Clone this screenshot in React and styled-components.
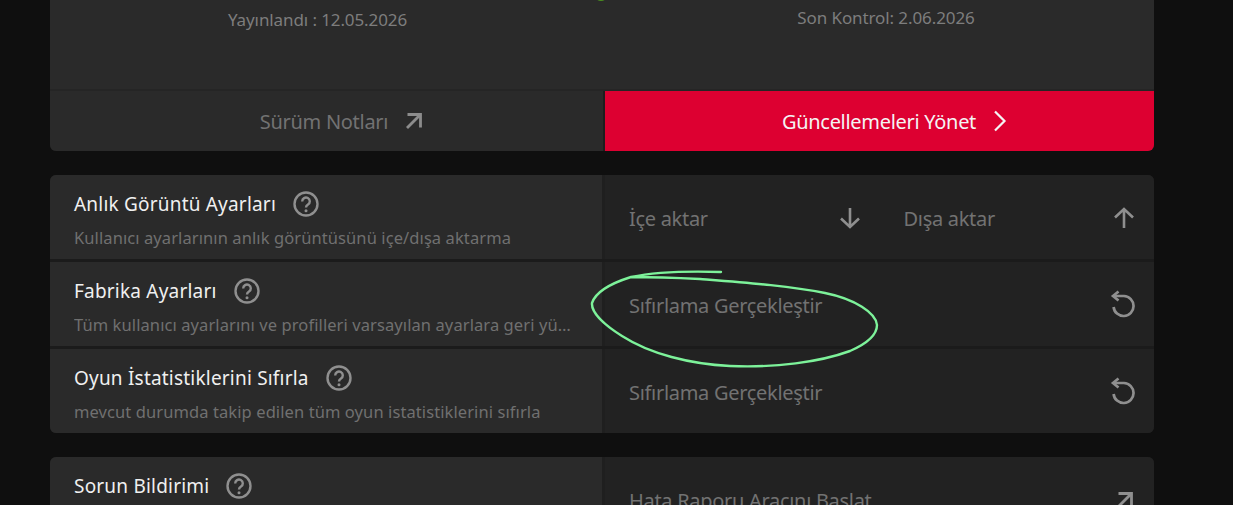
import React from 'react';
import styled, { createGlobalStyle } from 'styled-components';

const GlobalStyle = createGlobalStyle`
  html, body {
    margin: 0;
    height: 100%;
    overflow: hidden;
    background: #0e0e0e;
  }
`;

const Page = styled.div`
  position: relative;
  height: 505px;
  overflow: hidden;
  padding: 0 79px 0 50px;
  background: #0f0f0f;
  font-family: 'Noto Sans', 'Open Sans', sans-serif;
`;

const Scroller = styled.div`
  display: flex;
  flex-direction: column;
  gap: 24px;
  margin-top: -60px;
`;

const Panel = styled.section`
  border-radius: 6px;
  overflow: hidden;
  background: #1b1b1b;
`;

const Summary = styled.div`
  position: relative;
  display: grid;
  grid-template-columns: 535px 536px;
  column-gap: 33px;
  height: 151px;
  padding-top: 70px;
  box-sizing: border-box;
  background: #2a2a2a;
  border-bottom: 2px solid #252525;
`;

const StatusDot = styled.span`
  position: absolute;
  left: 544px;
  top: 47px;
  width: 14px;
  height: 14px;
  border-radius: 50%;
  background: #4a8f1e;
`;

const Stamp = styled.div`
  margin-top: ${({ $raised }) => ($raised ? -2 : 0)}px;
  font-size: 17px;
  line-height: 20px;
  color: #7d7d7d;
  text-align: center;
  letter-spacing: -0.1px;
`;

const ActionBar = styled.div`
  display: grid;
  grid-template-columns: 553px 1fr;
  height: 60px;
  gap: 2px;
  background: #1d1d1d;
`;

const ActionButton = styled.div`
  display: flex;
  align-items: center;
  justify-content: center;
  gap: 17px;
  padding-left: 30px;
  font-size: 20px;
  letter-spacing: -0.3px;
  color: ${({ $primary }) => ($primary ? '#f4f4f4' : '#727272')};
  background: ${({ $primary }) => ($primary ? '#dd0031' : '#2a2a2a')};

  svg {
    color: ${({ $primary }) => ($primary ? '#f4f4f4' : '#8c8c8c')};
  }
`;

const Rows = styled.div`
  display: flex;
  flex-direction: column;
  gap: 3px;
`;

const Row = styled.div`
  display: grid;
  grid-template-columns: 552px 1fr;
  gap: 3px;
  height: 84px;
  background: #1f1f1f;
`;

const Info = styled.div`
  box-sizing: border-box;
  padding: 15px 28px 0 24px;
  background: #2a2a2a;
  min-width: 0;
`;

const TitleLine = styled.div`
  display: flex;
  align-items: center;
  gap: 17px;
  height: 28px;
  font-size: 19px;
  letter-spacing: 0.2px;
  color: #f0f0f0;
`;

const HelpIcon = styled.svg`
  width: 26px;
  height: 26px;
  flex: none;
`;

const Description = styled.div`
  margin-top: 8px;
  font-size: 16.5px;
  line-height: 24px;
  letter-spacing: 0.09px;
  color: #707070;
  white-space: nowrap;
  overflow: hidden;
  text-overflow: ellipsis;
`;

const Controls = styled.div`
  display: flex;
  background: #222222;
`;

const Control = styled.div`
  flex: 1;
  display: flex;
  align-items: center;
  justify-content: space-between;
  box-sizing: border-box;
  height: 84px;
  padding: 2px 20px 0 24px;
  font-size: 20px;
  letter-spacing: -0.3px;
  color: #727272;

  svg {
    color: #8f8f8f;
    flex: none;
  }
`;

const Annotation = styled.svg`
  position: absolute;
  left: 0;
  top: 0;
  width: 1233px;
  height: 505px;
  pointer-events: none;
`;

const Help = () => (
  <HelpIcon viewBox="0 0 26 26" fill="none">
    <circle cx="13" cy="13" r="11.5" stroke="#8f8f8f" strokeWidth="2.4" />
    <path d="M9.2 10.4a3.8 3.8 0 1 1 5.8 3.2c-1.4.9-2 1.6-2 2.9" stroke="#8f8f8f" strokeWidth="2.4" />
    <circle cx="13" cy="19.8" r="1.5" fill="#8f8f8f" />
  </HelpIcon>
);

const ExternalIcon = () => (
  <svg width="18" height="18" viewBox="0 0 18 18" fill="none" stroke="currentColor" strokeWidth="2.8">
    <path d="M2.5 2.5h13v13" />
    <path d="M15.5 2.5 2 16" />
  </svg>
);

const ChevronIcon = () => (
  <svg width="14" height="22" viewBox="0 0 14 22" fill="none" stroke="currentColor" strokeWidth="2.2">
    <path d="M2 1.5 11.5 11 2 20.5" />
  </svg>
);

const ArrowIcon = ({ up }) => (
  <svg width="20" height="22" viewBox="0 0 20 22" fill="none" stroke="currentColor" strokeWidth="2.6">
    {up ? <path d="M10 21V2M1 10.5 10 2l9 8.5" /> : <path d="M10 1v19M1 11.5 10 20l9-8.5" />}
  </svg>
);

const ResetIcon = () => (
  <svg width="24" height="26" viewBox="-1 1 24 26" overflow="visible" fill="none" stroke="currentColor" strokeWidth="2.7">
    <path d="M7.5.5 2 5l5.5 4.5" />
    <path d="M3 5h10a10 10 0 1 1-10.4 11" />
  </svg>
);

const SettingRow = ({ title, description, children }) => (
  <Row>
    <Info>
      <TitleLine>
        {title}
        <Help />
      </TitleLine>
      <Description>{description}</Description>
    </Info>
    <Controls>{children}</Controls>
  </Row>
);

const App = () => (
  <Page>
    <GlobalStyle />
    <Scroller>
      <Panel>
        <Summary>
          <StatusDot />
          <Stamp>Yayınlandı : 12.05.2026</Stamp>
          <Stamp $raised>Son Kontrol: 2.06.2026</Stamp>
        </Summary>
        <ActionBar>
          <ActionButton>
            Sürüm Notları
            <ExternalIcon />
          </ActionButton>
          <ActionButton $primary>
            Güncellemeleri Yönet
            <ChevronIcon />
          </ActionButton>
        </ActionBar>
      </Panel>

      <Panel>
        <Rows>
          <SettingRow title="Anlık Görüntü Ayarları" description="Kullanıcı ayarlarının anlık görüntüsünü içe/dışa aktarma">
            <Control>
              İçe aktar
              <ArrowIcon />
            </Control>
            <Control>
              Dışa aktar
              <ArrowIcon up />
            </Control>
          </SettingRow>
          <SettingRow title="Fabrika Ayarları" description="Tüm kullanıcı ayarlarını ve profilleri varsayılan ayarlara geri yükler">
            <Control>
              Sıfırlama Gerçekleştir
              <ResetIcon />
            </Control>
          </SettingRow>
          <SettingRow title="Oyun İstatistiklerini Sıfırla" description="mevcut durumda takip edilen tüm oyun istatistiklerini sıfırla">
            <Control>
              Sıfırlama Gerçekleştir
              <ResetIcon />
            </Control>
          </SettingRow>
        </Rows>
      </Panel>

      <Panel>
        <SettingRow title="Sorun Bildirimi" description="Hata raporu oluştur">
          <Control>
            Hata Raporu Aracını Başlat
            <ExternalIcon />
          </Control>
        </SettingRow>
      </Panel>
    </Scroller>

    <Annotation viewBox="0 0 1233 505" fill="none">
      <path
        d="M721 272C690 271 655 272 631 277C612 283 596 291 592 303C591 313 606 326 622 336C650 354 690 364 730 366C775 368 820 362 850 351C866 344 877 335 877 325C876 313 855 299 825 293C790 286 750 283 700 279C680 278 660 277 631 277"
        stroke="#7df29a"
        strokeWidth="2.4"
        strokeLinecap="round"
      />
    </Annotation>
  </Page>
);

export default App;
